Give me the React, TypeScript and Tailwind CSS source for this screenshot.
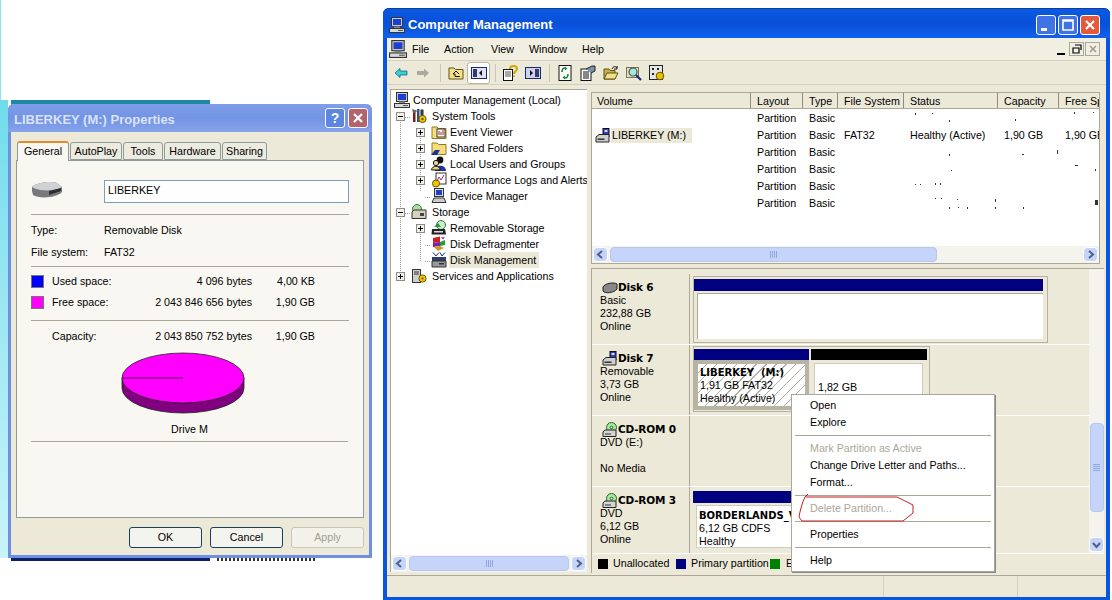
import React from 'react';

const Sep = ({ className = '' }: { className?: string }) => <div className={`h-px bg-[#aca899] ${className}`} />;

// ── small XP-ish icons ──
const PcIcon = ({ className = 'w-4 h-4' }: { className?: string }) => (
  <svg viewBox="0 0 16 16" className={className}>
    <rect x="2.5" y="0.5" width="11" height="9" fill="#c9c9c9" stroke="#333" />
    <rect x="4" y="2" width="8" height="6" fill="#1c3fd0" />
    <rect x="5" y="9.5" width="6" height="1.5" fill="#888" />
    <rect x="0.5" y="11.5" width="15" height="4" fill="#d8d8d8" stroke="#333" />
    <rect x="9" y="13" width="5" height="1" fill="#555" />
  </svg>
);

const DriveIcon = ({ usb = false, className = 'w-4 h-4' }: { usb?: boolean; className?: string }) => (
  <svg viewBox="0 0 16 16" className={className}>
    {usb && <rect x="8" y="0.5" width="6" height="8" fill="#2f3fc0" stroke="#111" />}
    {usb && <rect x="9.5" y="2" width="3" height="2" fill="#cfd8ff" />}
    <path d="M1 9 L4 6.5 H14 V14 H1 Z" fill="#cfcfcf" stroke="#222" />
    <rect x="2.5" y="10.5" width="7" height="1.5" fill="#333" />
  </svg>
);

const CdIcon = () => (
  <svg viewBox="0 0 16 16" className="w-4 h-4 shrink-0">
    <circle cx="9.5" cy="5.5" r="5" fill="#a8e6a0" stroke="#1f6d1f" />
    <circle cx="9.5" cy="5.5" r="1.3" fill="#fff" stroke="#1f6d1f" />
    <path d="M1 10 L3 8 H14 V14.5 H1 Z" fill="#d4d4d4" stroke="#222" />
    <rect x="3" y="11.5" width="6" height="1" fill="#333" />
  </svg>
);

const Tools = () => (
  <svg viewBox="0 0 16 16" className="w-4 h-4">
    <rect x="2" y="2" width="2.5" height="12" fill="#7a1f1f" />
    <rect x="6" y="1" width="2.5" height="13" fill="#2c4fa0" />
    <path d="M1 1 L7 3 L2 5 Z" fill="#666" />
    <circle cx="11.5" cy="11" r="3.6" fill="#f1c400" stroke="#6a5600" />
    <circle cx="11.5" cy="11" r="1.2" fill="#6a5600" />
    <rect x="9.5" y="1.5" width="3" height="6" fill="#333" />
  </svg>
);

const Folder = ({ overlay }: { overlay?: React.ReactNode }) => (
  <svg viewBox="0 0 16 16" className="w-4 h-4">
    <path d="M1 3 H6 L7.5 4.5 H15 V14.5 H1 Z" fill="#f6dc7a" stroke="#8f7a2a" />
    {overlay}
  </svg>
);

const TreeIcon = ({ kind }: { kind: string }) => {
  switch (kind) {
    case 'tools':
      return <Tools />;
    case 'event':
      return <Folder overlay={<><rect x="6" y="5" width="8" height="8" fill="#fff" stroke="#333" /><path d="M8 11 V7 M10 11 V8 M12 11 V6" stroke="#b02020" /></>} />;
    case 'shared':
      return <Folder overlay={<path d="M0 15 L4 10 H9 L6 15 Z" fill="#1d2f9e" />} />;
    case 'users':
      return (
        <svg viewBox="0 0 16 16" className="w-4 h-4">
          <circle cx="9" cy="4" r="3.4" fill="#111" />
          <path d="M4 15 C4 8 15 8 15 15 Z" fill="#2431a0" />
          <circle cx="5" cy="7" r="2.6" fill="#f2d6a0" stroke="#111" />
          <path d="M0.5 14 C1 9 9 9 9 14 Z" fill="#e5d37a" stroke="#111" />
        </svg>
      );
    case 'perf':
      return (
        <svg viewBox="0 0 16 16" className="w-4 h-4">
          <rect x="5" y="1" width="10" height="11" fill="#fff" stroke="#333" />
          <path d="M6 9 L8 5 L10 8 L13 3" stroke="#b02080" fill="none" />
          <circle cx="5" cy="11.5" r="3.5" fill="#f1c400" stroke="#6a5600" />
        </svg>
      );
    case 'device':
      return (
        <svg viewBox="0 0 16 16" className="w-4 h-4">
          <rect x="3.5" y="0.5" width="9" height="8" fill="#ddd" stroke="#333" />
          <rect x="5" y="2" width="6" height="5" fill="#2040c8" />
          <path d="M1 14.5 L3 10 H13 L15 14.5 Z" fill="#ccc" stroke="#333" />
        </svg>
      );
    case 'storage':
      return (
        <svg viewBox="0 0 16 16" className="w-4 h-4">
          <circle cx="6" cy="5" r="4.5" fill="#a8e0a0" stroke="#3a7a3a" />
          <path d="M1 8 L3 6 H15 V14.5 H1 Z" fill="#d6d2c2" stroke="#333" />
          <rect x="9" y="9" width="4" height="3" fill="#444" />
        </svg>
      );
    case 'removable':
      return (
        <svg viewBox="0 0 16 16" className="w-4 h-4">
          <circle cx="10" cy="5" r="4.5" fill="#cfe8cf" stroke="#3a7a3a" />
          <path d="M3 7 L7 3 L10 7 Z" fill="#2a9a3a" />
          <path d="M1 9 H14 L15 14.5 H0.5 Z" fill="#222" />
          <rect x="3" y="11" width="9" height="1.5" fill="#ddd" />
        </svg>
      );
    case 'defrag':
      return (
        <svg viewBox="0 0 16 16" className="w-4 h-4">
          <path d="M2 2 L9 0.5 V6 L2 7 Z" fill="#d01f1f" />
          <path d="M2 7 L9 6 V10 L2 11 Z" fill="#7a1fb0" />
          <path d="M9 6 L14 4 V9 L9 10 Z" fill="#1fa03a" />
          <path d="M3 11 L9 10 L13 12 L7 15 Z" fill="#c89a1f" />
          <path d="M10 1 L14 1.5 L12 3.5 Z" fill="#c01f9a" />
        </svg>
      );
    case 'disk':
      return (
        <svg viewBox="0 0 16 16" className="w-4 h-4">
          <path d="M2 0.5 L5 4 L8 0.5 M9 0.5 L11 4 L14 0.5" stroke="#1a2a80" fill="none" />
          <rect x="1" y="5" width="14" height="4" fill="#2b3f6a" />
          <path d="M1 9 H15 V15 H1 Z" fill="#9a9a9a" stroke="#333" />
          <rect x="8" y="11" width="5" height="1.5" fill="#333" />
        </svg>
      );
    case 'services':
      return (
        <svg viewBox="0 0 16 16" className="w-4 h-4">
          <rect x="1.5" y="1.5" width="8" height="13" fill="#cfcfcf" stroke="#333" />
          <path d="M3 4 H8 M3 6 H8" stroke="#333" />
          <circle cx="11.5" cy="10.5" r="3.6" fill="#f1c400" stroke="#6a5600" />
          <circle cx="11.5" cy="10.5" r="1.1" fill="#6a5600" />
        </svg>
      );
    default:
      return <PcIcon />;
  }
};

const Expander = ({ open }: { open?: boolean }) => (
  <div className="w-[9px] h-[9px] border border-[#8a8a8a] bg-[#f2f0e6] relative shrink-0">
    <div className="absolute left-[1px] right-[1px] top-[3px] h-px bg-black" />
    {!open && <div className="absolute top-[1px] bottom-[1px] left-[3px] w-px bg-black" />}
  </div>
);

type Node = { label: string; icon: string; level: number; exp?: 'open' | 'closed'; selected?: boolean };

const TREE: Node[] = [
  { label: 'System Tools', icon: 'tools', level: 1, exp: 'open' },
  { label: 'Event Viewer', icon: 'event', level: 2, exp: 'closed' },
  { label: 'Shared Folders', icon: 'shared', level: 2, exp: 'closed' },
  { label: 'Local Users and Groups', icon: 'users', level: 2, exp: 'closed' },
  { label: 'Performance Logs and Alerts', icon: 'perf', level: 2, exp: 'closed' },
  { label: 'Device Manager', icon: 'device', level: 2 },
  { label: 'Storage', icon: 'storage', level: 1, exp: 'open' },
  { label: 'Removable Storage', icon: 'removable', level: 2, exp: 'closed' },
  { label: 'Disk Defragmenter', icon: 'defrag', level: 2 },
  { label: 'Disk Management', icon: 'disk', level: 2, selected: true },
  { label: 'Services and Applications', icon: 'services', level: 1, exp: 'closed' },
];

const ArrowBtn = ({ dir }: { dir: 'l' | 'r' | 'd' }) => {
  const d = dir === 'l' ? 'M7 2 L3 5.5 L7 9' : dir === 'r' ? 'M4 2 L8 5.5 L4 9' : 'M2 4 L5.5 8 L9 4';
  return (
    <div className="w-[15px] h-[15px] rounded-sm border border-[#fff] bg-[#c5d4f8] flex items-center justify-center shrink-0">
      <svg viewBox="0 0 11 11" className="w-[11px] h-[11px]">
        <path d={d} fill="none" stroke="#4d6185" strokeWidth="2" />
      </svg>
    </div>
  );
};

const Grip = ({ vertical = false }: { vertical?: boolean }) =>
  vertical ? (
    <div className="flex flex-col gap-px w-[7px]">
      <div className="h-px bg-[#8fa6e0]" /><div className="h-px bg-[#8fa6e0]" /><div className="h-px bg-[#8fa6e0]" /><div className="h-px bg-[#8fa6e0]" />
    </div>
  ) : (
    <div className="flex gap-px h-[7px]">
      <div className="w-px bg-[#8fa6e0]" /><div className="w-px bg-[#8fa6e0]" /><div className="w-px bg-[#8fa6e0]" /><div className="w-px bg-[#8fa6e0]" />
    </div>
  );

const HScroll = ({ thumb, gap }: { thumb: number; gap: number }) => (
  <div className="h-[17px] bg-[#f4f3ee] flex items-center px-px shrink-0">
    <ArrowBtn dir="l" />
    <div
      className="h-[15px] ml-[2px] rounded-sm border border-[#b6c7f0] bg-[#c5d4f8] flex items-center justify-center"
      style={{ width: thumb }}
    >
      <Grip />
    </div>
    <div className="shrink-0" style={{ width: gap }} />
    <ArrowBtn dir="r" />
  </div>
);

const COLS = 'grid grid-cols-[159px_52px_35px_66px_94px_61px_60px]';

const ROWS = [
  ['', 'Partition', 'Basic', '', '', '', ''],
  ['LIBERKEY (M:)', 'Partition', 'Basic', 'FAT32', 'Healthy (Active)', '1,90 GB', '1,90 GB'],
  ['', 'Partition', 'Basic', '', '', '', ''],
  ['', 'Partition', 'Basic', '', '', '', ''],
  ['', 'Partition', 'Basic', '', '', '', ''],
  ['', 'Partition', 'Basic', '', '', '', ''],
];

const HEADERS = ['Volume', 'Layout', 'Type', 'File System', 'Status', 'Capacity', 'Free Sp'];

const DiskLabel = ({ icon, name, lines }: { icon: React.ReactNode; name: string; lines: string[] }) => (
  <div className="w-[98px] shrink-0 pl-[8px] pt-[7px] border-r border-[#aca899] leading-[13px]">
    <div className="flex items-center h-[13px] font-bold pl-[2px]">
      {icon}
      <span className="font-['DejaVu_Sans',sans-serif] text-[10.5px] tracking-[-0.2px]">{name}</span>
    </div>
    {lines.map((l, i) => (
      <div key={i} className="h-[13px] whitespace-pre">{l}</div>
    ))}
  </div>
);

const WinBtn = ({ kind }: { kind: 'min' | 'max' | 'close' | 'help' }) => {
  const bg = kind === 'close' ? 'bg-[#e2593b]' : 'bg-[#3f73e6]';
  return (
    <div className={`w-[20px] h-[20px] rounded-[3px] border border-white flex items-center justify-center ${bg}`}>
      <svg viewBox="0 0 14 14" className="w-[14px] h-[14px]">
        {kind === 'min' && <rect x="2" y="10" width="6" height="3" fill="#fff" />}
        {kind === 'max' && <path d="M2 2 H12 V12 H2 Z M2 3 H12" fill="none" stroke="#fff" strokeWidth="1.6" />}
        {kind === 'close' && <path d="M3 3 L11 11 M11 3 L3 11" stroke="#fff" strokeWidth="2.2" />}
      </svg>
    </div>
  );
};

const TabBtn = ({ label, w, active }: { label: string; w: number; active?: boolean }) => (
  <div
    className={
      active
        ? 'h-[20px] -mb-px pb-[2px] relative rounded-t-[3px] border border-b-0 border-[#919b9c] border-t-[#e68b2c] border-t-2 bg-[#f8f7f2] flex items-center justify-center z-10'
        : 'h-[18px] rounded-t-[3px] border border-[#919b9c] bg-[#ecebe0] flex items-center justify-center'
    }
    style={{ width: w }}
  >
    {label}
  </div>
);

const DlgBtn = ({ label, disabled }: { label: string; disabled?: boolean }) => (
  <div
    className={`w-[73px] h-[21px] rounded-[3px] border flex items-center justify-center ${
      disabled ? 'border-[#c9c7ba] text-[#a19f90] bg-[#f3f2ea]' : 'border-[#1a3f60] bg-[#f4f4ee]'
    }`}
  >
    {label}
  </div>
);

const Speck = () => (
  <svg className="absolute left-0 top-0 w-[510px] h-[130px] pointer-events-none" viewBox="0 0 510 130">
    <g fill="#333">
      <rect x="323" y="20" width="1" height="2" /><rect x="340" y="20" width="1" height="1" /><rect x="357" y="27" width="1" height="2" />
      <rect x="423" y="26" width="1" height="2" /><rect x="482" y="19" width="1" height="2" /><rect x="501" y="19" width="1" height="1" />
      <rect x="357" y="61" width="1" height="2" /><rect x="430" y="61" width="2" height="1" /><rect x="465" y="57" width="1" height="4" />
      <rect x="359" y="77" width="1" height="1" /><rect x="483" y="72" width="3" height="1" /><rect x="503" y="76" width="1" height="2" />
      <rect x="323" y="91" width="1" height="1" /><rect x="328" y="91" width="1" height="1" /><rect x="343" y="90" width="1" height="2" /><rect x="348" y="90" width="1" height="2" />
      <rect x="343" y="105" width="1" height="1" /><rect x="349" y="105" width="1" height="1" /><rect x="365" y="106" width="1" height="1" /><rect x="403" y="106" width="1" height="3" />
      <rect x="357" y="114" width="1" height="2" /><rect x="366" y="114" width="1" height="1" /><rect x="375" y="114" width="1" height="2" /><rect x="403" y="114" width="1" height="2" />
      <rect x="431" y="114" width="1" height="2" /><rect x="503" y="107" width="3" height="5" />
    </g>
  </svg>
);

export default function App() {
  return (
    <div className="relative w-[1112px] h-[600px] bg-white overflow-hidden font-['Liberation_Sans',sans-serif] text-[10.7px] text-black">
      {/* bits of the desktop behind the dialog */}
      <div className="absolute left-0 top-0 w-px h-[100px] bg-[#8fe3f0]" />
      <div className="absolute left-0 top-[100px] w-[8px] h-[458px] bg-gradient-to-b from-[#6fdcec] to-[#c8f4fa]" />
      <div className="absolute left-[11px] top-[100px] w-[199px] h-[5px] bg-[#1e87a6]" />
      <div className="absolute left-[11px] top-[556px] w-[199px] h-[5px] bg-[#0c1f6e]" />
      <div className="absolute left-[217px] top-[558px] w-[100px] h-[3px] bg-[repeating-linear-gradient(90deg,#333,#333_2px,#fff_2px,#fff_4px)]" />

      {/* properties dialog */}
      <div className="absolute left-[8px] top-[104px] w-[364px] h-[454px] rounded-t-md border-x-[3px] border-b-[3px] border-[#6f8fe0] bg-[#ece9d8] flex flex-col">
        <div className="h-[28px] -mx-[3px] rounded-t-md bg-gradient-to-b from-[#7f9fe8] via-[#7393e4] to-[#86a3ea] flex items-center justify-between pl-[6px] pr-[4px] shrink-0">
          <span className="font-bold text-[13px] text-[#d9e3f7] pt-[3px]">LIBERKEY (M:) Properties</span>
          <div className="flex gap-[3px]">
            <div className="w-[20px] h-[20px] rounded-[3px] border border-white bg-[#5b86e2] text-white font-bold text-[14px] leading-[18px] text-center">?</div>
            <div className="w-[20px] h-[20px] rounded-[3px] border border-white bg-[#b5636d] flex items-center justify-center">
              <svg viewBox="0 0 14 14" className="w-[14px] h-[14px]"><path d="M3 3 L11 11 M11 3 L3 11" stroke="#fff" strokeWidth="2.2" /></svg>
            </div>
          </div>
        </div>

        <div className="flex items-end gap-px pl-[6px] pr-[6px] pt-[9px] h-[28px] shrink-0">
          <TabBtn label="General" w={52} active />
          <TabBtn label="AutoPlay" w={52} />
          <TabBtn label="Tools" w={40} />
          <TabBtn label="Hardware" w={57} />
          <TabBtn label="Sharing" w={45} />
        </div>

        <div className="mx-[5px] w-[348px] h-[358px] border border-[#919b9c] bg-[#f8f7f2] px-[14px] shrink-0">
          <div className="flex items-start h-[53px] pt-[19px]">
            <svg viewBox="0 0 32 18" className="w-[32px] h-[18px] shrink-0 mt-px">
              <path d="M1 6 C6 1 20 0 26 2 L31 6 L31 11 C26 17 8 18 2 14 L1 10 Z" fill="#77797c" />
              <path d="M1 6 C6 1 20 0 26 2 L31 6 C26 10 8 11 1 6 Z" fill="#cfd1d3" />
              <path d="M18 10 L30 7 L30 10 L18 14 Z" fill="#2d2f32" />
            </svg>
            <div className="ml-[41px] w-[246px] h-[23px] border border-[#7f9db9] bg-white pl-[3px] leading-[19px]">LIBERKEY</div>
          </div>
          <Sep />
          <div className="grid grid-cols-[73px_1fr] h-[51px] pt-[4px] auto-rows-[22px] items-center">
            <span>Type:</span><span>Removable Disk</span>
            <span>File system:</span><span>FAT32</span>
          </div>
          <Sep />
          <div className="grid grid-cols-[21px_80px_120px_63px] auto-rows-[21px] items-center pt-[4px] h-[53px]">
            <div className="w-[13px] h-[13px] bg-[#0000ff] border border-[#777]" /><span>Used space:</span><span className="text-right">4 096 bytes</span><span className="text-right">4,00 KB</span>
            <div className="w-[13px] h-[13px] bg-[#ff00ff] border border-[#777]" /><span>Free space:</span><span className="text-right whitespace-nowrap">2 043 846 656 bytes</span><span className="text-right">1,90 GB</span>
          </div>
          <Sep />
          <div className="grid grid-cols-[21px_80px_120px_63px] h-[31px] items-center">
            <span /><span>Capacity:</span><span className="text-right whitespace-nowrap">2 043 850 752 bytes</span><span className="text-right">1,90 GB</span>
          </div>
          <svg viewBox="0 0 124 62" className="w-[124px] h-[62px] ml-[90px]">
            <path d="M1 26 V36 A61 25 0 0 0 123 36 V26 Z" fill="#80007f" stroke="#222" strokeWidth="0.8" />
            <ellipse cx="62" cy="26" rx="61" ry="25" fill="#ff00ff" stroke="#222" strokeWidth="0.8" />
            <path d="M1 26 H62" stroke="#5a0060" strokeWidth="1" />
          </svg>
          <div className="h-[27px] pl-[140px] pt-[8px] leading-[14px]">Drive M</div>
          <Sep className="w-[317px]" />
        </div>

        <div className="flex justify-end gap-[8px] pr-[5px] pt-[9px]">
          <DlgBtn label="OK" />
          <DlgBtn label="Cancel" />
          <DlgBtn label="Apply" disabled />
        </div>
      </div>

      {/* computer management window */}
      <div className="absolute left-[383px] top-[8px] w-[727px] h-[592px] rounded-t-md border-x-[4px] border-b-[3px] border-[#0a55e0] bg-[#ece9d8] flex flex-col">
        <div className="h-[30px] -mx-[4px] rounded-t-md bg-gradient-to-b from-[#0a5ae2] via-[#0a4fd8] to-[#0f62ee] border-t border-[#123a9a] flex items-center justify-between pl-[6px] pr-[10px] pt-[2px] shrink-0">
          <div className="flex items-center gap-[3px]">
            <PcIcon />
            <span className="font-bold text-[13px] text-white">Computer Management</span>
          </div>
          <div className="flex gap-[2px]">
            <WinBtn kind="min" />
            <WinBtn kind="max" />
            <WinBtn kind="close" />
          </div>
        </div>

        {/* menu bar */}
        <div className="h-[23px] flex items-center border-b border-[#d4d0c0] bg-[#f1efe2] shrink-0 pl-[2px]">
          <PcIcon className="w-[18px] h-[18px]" />
          <div className="flex ml-[5px]">
            <span className="w-[32px]">File</span>
            <span className="w-[47px]">Action</span>
            <span className="w-[38px]">View</span>
            <span className="w-[53px]">Window</span>
            <span>Help</span>
          </div>
          <div className="ml-auto mr-[6px] flex items-center gap-[1px]">
            <div className="w-[15px] h-[14px] flex items-end justify-center"><div className="w-[8px] h-[2px] bg-black mb-[1px]" /></div>
            <div className="w-[15px] h-[14px] border border-[#aca899] flex items-center justify-center">
              <svg viewBox="0 0 10 10" className="w-[10px] h-[10px]"><path d="M3 1 H9 V6 M1 4 H7 V9 H1 Z" fill="none" stroke="#000" strokeWidth="1.2" /></svg>
            </div>
            <div className="w-[15px] h-[14px] border border-[#aca899] flex items-center justify-center">
              <svg viewBox="0 0 10 10" className="w-[10px] h-[10px]"><path d="M2 2 L8 8 M8 2 L2 8" stroke="#999" strokeWidth="1.5" /></svg>
            </div>
          </div>
        </div>

        {/* toolbar */}
        <div className="h-[24px] flex items-center pl-[7px] border-b border-[#d4d0c0] shrink-0">
          <svg viewBox="0 0 14 12" className="w-[14px] h-[12px]"><path d="M1 6 L6 1.5 V4 H13 V8 H6 V10.5 Z" fill="#35d0d8" stroke="#0d5a70" strokeWidth="0.7" /></svg>
          <svg viewBox="0 0 14 12" className="w-[14px] h-[12px] ml-[8px]"><path d="M13 6 L8 1.5 V4 H1 V8 H8 V10.5 Z" fill="#a9a9a0" /></svg>
          <div className="w-px h-[18px] bg-[#c8c5b4] ml-[10px]" />
          <svg viewBox="0 0 16 14" className="w-[16px] h-[14px] ml-[7px]"><path d="M1 2 H6 L7.5 3.5 H15 V13 H1 Z" fill="#f6e08a" stroke="#5f5210" /><path d="M8 5 L5 8 H7 V10.5 H12 M8 5 L11 8" fill="none" stroke="#111" /></svg>
          <div className="ml-[3px] w-[23px] h-[22px] rounded-[3px] border border-[#b9b6a6] bg-white flex items-center justify-center">
            <svg viewBox="0 0 16 12" className="w-[16px] h-[12px]"><rect x="0.5" y="0.5" width="15" height="11" fill="#dfe3f5" stroke="#1d2a6a" /><rect x="2" y="2" width="4" height="8" fill="#333a70" /><path d="M11 3 L8 6 L11 9 Z" fill="#111" /></svg>
          </div>
          <div className="w-px h-[18px] bg-[#c8c5b4] ml-[5px]" />
          <svg viewBox="0 0 16 16" className="w-[16px] h-[16px] ml-[6px]"><rect x="1.5" y="4.5" width="9" height="11" fill="#fff" stroke="#111" /><path d="M3 7 H9 M3 9 H9 M3 11 H9" stroke="#555" /><path d="M8 4 C8 0 15 0 15 4 C15 6 12 6 12 9 M12 10.5 V12" fill="none" stroke="#d0a800" strokeWidth="2" /></svg>
          <svg viewBox="0 0 16 12" className="w-[16px] h-[12px] ml-[7px]"><rect x="0.5" y="0.5" width="15" height="11" fill="#cdd2ee" stroke="#1d2a6a" /><rect x="10" y="2" width="4" height="8" fill="#333a70" /><path d="M5 3 L8 6 L5 9 Z" fill="#111" /></svg>
          <div className="w-px h-[18px] bg-[#c8c5b4] ml-[8px]" />
          <svg viewBox="0 0 14 16" className="w-[14px] h-[16px] ml-[8px]"><rect x="1" y="0.5" width="12" height="15" fill="#fff" stroke="#111" /><path d="M7 3 C4 3 4 6 4 7 M7 13 C10 13 10 10 10 9" fill="none" stroke="#1a8a2a" strokeWidth="1.6" /><path d="M7 1.5 L9.5 3.5 L7 5.5 Z M7 10.5 L4.5 12.5 L7 14.5 Z" fill="#1a8a2a" /></svg>
          <svg viewBox="0 0 16 16" className="w-[16px] h-[16px] ml-[8px]"><rect x="1" y="4" width="10" height="11.5" fill="#fff" stroke="#111" /><path d="M3 7 H9 M3 9 H9 M3 11 H9 M3 13 H9" stroke="#111" /><path d="M6 4 L12 1 H15 V6 L11 8" fill="#7a8fa8" stroke="#222" /></svg>
          <svg viewBox="0 0 16 14" className="w-[16px] h-[14px] ml-[7px]"><path d="M1 3 H6 L7 4.5 H12 V13 H1 Z" fill="#c8b04a" stroke="#5f5210" /><path d="M1 13 L4 7 H15 L12 13 Z" fill="#f2e18a" stroke="#5f5210" /><path d="M9 3 C10 0 13 0 14 2 M14 0 V3 H11" fill="none" stroke="#111" /></svg>
          <svg viewBox="0 0 16 16" className="w-[16px] h-[16px] ml-[7px]"><rect x="0.5" y="2.5" width="12" height="10" fill="#e8e2b8" stroke="#7a7448" /><circle cx="7" cy="7" r="4" fill="#a8e6d8" stroke="#3a5a6a" strokeWidth="1.2" /><path d="M10 10 L15 15" stroke="#1a2a80" strokeWidth="2.2" /></svg>
          <svg viewBox="0 0 16 16" className="w-[16px] h-[16px] ml-[7px]"><rect x="0.5" y="0.5" width="13" height="14" fill="#e6e6e6" stroke="#222" /><path d="M3 3 H5 V5 H3 Z M8 3 H10 V5 H8 Z M3 8 H5 V10 H3 Z" fill="#222" /><circle cx="11" cy="11" r="3.8" fill="#e8c000" stroke="#6a5600" /></svg>
        </div>

        {/* panes */}
        <div className="flex-1 min-h-0 flex pl-[3px] pr-[2px] pt-[4px] gap-[4px]">
          {/* tree */}
          <div className="w-[197px] h-[483px] border-l border-t border-[#aca899] bg-white flex flex-col shrink-0">
            <div className="relative flex-1 pt-[2px] overflow-hidden">
              <svg className="absolute left-0 top-0 w-[60px] h-[200px]" viewBox="0 0 60 200">
                <path d="M9.5 22 V190 M29.5 44 V102 M29.5 140 V172 M14 27.5 H20 M14 123.5 H20 M34 107.5 H40 M34 155.5 H40 M34 171.5 H40" stroke="#999" strokeDasharray="1 1" fill="none" />
              </svg>
              <div className="h-[16px] flex items-center pl-[3px] relative">
                <PcIcon />
                <span className="ml-[3px] whitespace-nowrap">Computer Management (Local)</span>
              </div>
              {TREE.map((n) => (
                <div key={n.label} className={`h-[16px] flex items-center relative ${n.level === 1 ? 'pl-[5px]' : 'pl-[25px]'}`}>
                  <div className="w-[9px] flex justify-center shrink-0">
                    {n.exp && <Expander open={n.exp === 'open'} />}
                  </div>
                  <div className="ml-[6px] shrink-0"><TreeIcon kind={n.icon} /></div>
                  <span className={`px-[1px] whitespace-nowrap ${n.level === 1 ? 'ml-[4px]' : 'ml-[2px]'} ${n.selected ? 'bg-[#ece9d8] pr-[3px]' : ''}`}>{n.label}</span>
                </div>
              ))}
            </div>
            <HScroll thumb={162} gap={2} />
          </div>

          {/* right side */}
          <div className="flex-1 min-w-0 flex flex-col pt-[3px]">
            {/* volume list */}
            <div className="h-[172px] w-[509px] border border-[#aca899] bg-white flex flex-col shrink-0 overflow-hidden relative">
              <div className={`${COLS} h-[16px] bg-[#ece9d8] border-b border-[#aca899] shrink-0`}>
                {HEADERS.map((h, i) => (
                  <div key={h} className={`${i === 0 ? 'pl-[5px]' : 'pl-[6px]'} border-r border-[#8f8c7c] leading-[16px] whitespace-nowrap overflow-hidden last:border-r-0`}>{h}</div>
                ))}
              </div>
              <div className="pt-[1px] flex-1">
                {ROWS.map((r, i) => (
                  <div key={i} className={`${COLS} h-[17px] items-center`}>
                    {r.map((c, j) => (
                      <div key={j} className={`whitespace-nowrap overflow-hidden ${j === 0 ? 'pl-[3px]' : 'pl-[6px]'}`}>
                        {j === 0 && c ? (
                          <div className="flex items-center"><DriveIcon usb /><span className="bg-[#ece9d8] pl-px pr-[6px] leading-[15px]">{c}</span></div>
                        ) : (
                          c
                        )}
                      </div>
                    ))}
                  </div>
                ))}
              </div>
              <Speck />
              <HScroll thumb={329} gap={146} />
            </div>

            <div className="h-[4px] shrink-0" />

            {/* disk graphics */}
            <div className="w-[513px] h-[305px] border-t border-l border-[#aca899] flex flex-col shrink-0">
              <div className="flex-1 min-h-0 flex">
                <div className="flex-1 min-w-0 flex flex-col pt-[5px]">
                  {/* Disk 6 */}
                  <div className="h-[71px] flex border-b border-[#fff] shrink-0">
                    <DiskLabel icon={<svg viewBox="0 0 16 12" className="w-[16px] h-[12px] shrink-0"><path d="M1 5 C3 1 12 0 15 2 V7 C12 11 3 12 1 9 Z" fill="#888" stroke="#222" /></svg>} name="Disk 6" lines={['Basic', '232,88 GB', 'Online']} />
                    <div className="flex-1 pl-[3px] pt-[2px]">
                      <div className="w-[355px] h-[67px] border border-[#b5b2a2] pt-[2px] pr-[4px]">
                        <div className="h-[12px] bg-[#000080]" />
                        <div className="ml-[3px] mt-[2px] h-[46px] bg-white border-l border-t border-[#aca899]" />
                      </div>
                    </div>
                  </div>
                  {/* Disk 7 */}
                  <div className="h-[71px] flex border-b border-[#fff] shrink-0">
                    <DiskLabel icon={<DriveIcon usb className="w-4 h-4 shrink-0" />} name="Disk 7" lines={['Removable', '3,73 GB', 'Online']} />
                    <div className="flex-1 pl-[3px] pt-[1px]">
                      <div className="w-[237px] h-[66px] border border-[#b5b2a2] flex gap-[2px] pt-[2px]">
                        <div className="w-[115px]">
                          <div className="h-[11px] bg-[#000080]" />
                          <div className="h-[50px] border-[4px] border-[#b7b4a4] bg-[repeating-linear-gradient(135deg,#fff,#fff_6px,#b0b0a8_6px,#b0b0a8_7px)] pl-[2px] leading-[13px] pt-[2px]">
                            <div className="font-bold font-['DejaVu_Sans',sans-serif] text-[10px]">LIBERKEY&nbsp; (M:)</div>
                            <div>1,91 GB FAT32</div>
                            <div>Healthy (Active)</div>
                          </div>
                        </div>
                        <div className="w-[116px]">
                          <div className="h-[11px] bg-black" />
                          <div className="mt-[3px] ml-[3px] w-[109px] h-[46px] bg-white border border-[#cfccbc] pl-[3px] pt-[15px]">1,82 GB</div>
                        </div>
                      </div>
                    </div>
                  </div>
                  {/* CD-ROM 0 */}
                  <div className="h-[71px] flex border-b border-[#fff] shrink-0">
                    <DiskLabel icon={<CdIcon />} name="CD-ROM 0" lines={['DVD (E:)', ' ', 'No Media']} />
                    <div className="flex-1" />
                  </div>
                  {/* CD-ROM 3 */}
                  <div className="h-[66px] flex shrink-0">
                    <DiskLabel icon={<CdIcon />} name="CD-ROM 3" lines={['DVD', '6,12 GB', 'Online']} />
                    <div className="flex-1 pl-[3px] pt-[4px]">
                      <div className="h-[12px] w-[130px] bg-[#000080]" />
                      <div className="mt-[2px] ml-[3px] w-[120px] h-[43px] bg-white border border-[#cfccbc] pl-[2px] pt-[3px] leading-[13px]">
                        <div className="font-bold font-['DejaVu_Sans',sans-serif] text-[10px]">BORDERLANDS_V</div>
                        <div>6,12 GB CDFS</div>
                        <div>Healthy</div>
                      </div>
                    </div>
                  </div>
                </div>
                {/* vertical scrollbar */}
                <div className="w-[15px] bg-[#f4f3ee] flex flex-col items-center justify-end shrink-0 pb-px">
                  <div className="w-[14px] h-[89px] rounded-sm border border-[#b6c7f0] bg-[#c5d4f8] flex items-center justify-center">
                    <Grip vertical />
                  </div>
                  <div className="h-[25px]" />
                  <ArrowBtn dir="d" />
                </div>
              </div>
              {/* legend */}
              <div className="h-[20px] flex items-center pl-[6px] border-t border-[#fff] shrink-0 whitespace-nowrap">
                <div className="w-[10px] h-[10px] bg-black mr-[5px] shrink-0" />
                <span className="w-[63px] shrink-0">Unallocated</span>
                <div className="w-[10px] h-[10px] bg-[#000080] mr-[5px] shrink-0" />
                <span className="w-[79px] shrink-0">Primary partition</span>
                <div className="w-[10px] h-[10px] bg-[#008000] mr-[6px] shrink-0" />
                <span>E</span>
              </div>
            </div>
          </div>
        </div>

        {/* status bar */}
        <div className="h-[22px] flex border-t border-[#aca899] shrink-0 bg-[#ece9d8]">
          <div className="w-[497px] border-r border-[#d4d0c0]" />
          <div className="w-[134px] border-r border-[#d4d0c0]" />
        </div>
      </div>

      {/* context menu */}
      <div className="absolute left-[791px] top-[394px] w-[204px] h-[178px] bg-white border border-[#aca899] shadow-[1px_1px_0_#888] pt-[2px] px-[3px]">
        {[
          'Open',
          'Explore',
          '-',
          '~Mark Partition as Active',
          'Change Drive Letter and Paths...',
          'Format...',
          '-',
          '~Delete Partition...',
          '-',
          'Properties',
          '-',
          'Help',
        ].map((label, i) => {
          if (label === '-') return <div key={i} className="h-px bg-[#aca899] my-[4px]" />;
          const off = label.startsWith('~');
          return (
            <div key={i} className={`h-[17px] leading-[17px] pl-[15px] ${off ? 'text-[#aca899]' : ''}`}>
              {off ? label.slice(1) : label}
            </div>
          );
        })}
        <svg className="absolute left-[6px] top-[98px] w-[120px] h-[30px]" viewBox="0 0 120 30">
          <path d="M10 1 L7 4 C4 10 2 18 1 24 L4 28 H105 L115 20 V12 L99 4 H8" fill="none" stroke="#c81f1f" strokeWidth="1" />
        </svg>
      </div>
    </div>
  );
}
